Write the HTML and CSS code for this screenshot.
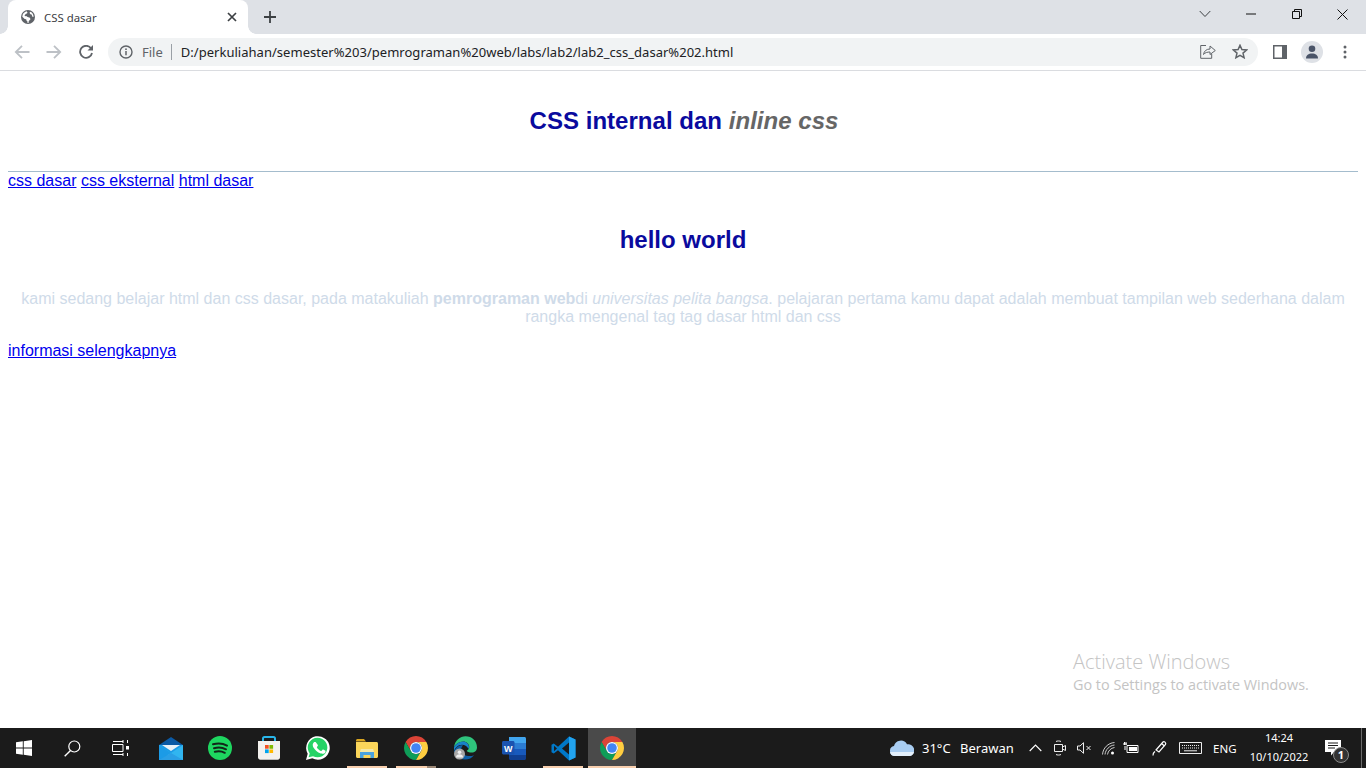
FILE: index.html
```html
<!DOCTYPE html>
<html lang="id">
<head>
<meta charset="utf-8">
<title>CSS dasar</title>
<link rel="stylesheet" href="styles.css">
</head>
<body>
<svg class="defs" width="0" height="0">
  <symbol id="chrome" viewBox="0 0 24 24">
    <path fill="#db4437" d="M22.39 6H12A6 6 0 0 0 6.8 15L1.61 6A12 12 0 0 1 22.39 6Z"/>
    <path fill="#0f9d58" d="M1.61 6L6.8 15A6 6 0 0 0 17.2 15L12 24A12 12 0 0 1 1.61 6Z"/>
    <path fill="#ffcd40" d="M12 24L17.2 15A6 6 0 0 0 12 6H22.39A12 12 0 0 1 12 24Z"/>
    <circle cx="12" cy="12" r="6" fill="#fff"/>
    <circle cx="12" cy="12" r="4.8" fill="#4285f4"/>
  </symbol>
</svg>
<div class="screen">
  <header class="tabstrip">
    <div class="tab">
      <svg class="tab-favicon" width="14" height="14" viewBox="0 0 14 14"><circle cx="7" cy="7" r="7" fill="#5f6368"/><path fill="#fff" d="M5.6 1.2C4 1.7 2.6 2.8 1.8 4.3L1.3 6.8 3.7 9l1.5.3.4 1.5.9.8V13l1 .1.3-2.1 1.7-1.8-.6-1.4-2.3-.9-1.4-.9-1.2.2-.4-1 1.4-1.4 1-.3.5-1.1zM9.3 1.8l-.8 1 .9 1.5 1.2.2.8 2.3 1.1.2C12.7 4.600 11.400 2.700 9.300 1.800z"/></svg>
      <span class="tab-title">CSS dasar</span>
      <svg class="tab-close" width="10" height="10" viewBox="0 0 10 10"><path d="M1 1l8 8M9 1l-8 8" stroke="#3c4043" stroke-width="1.700" fill="none"/></svg>
    </div>
    <svg class="new-tab" width="12" height="12" viewBox="0 0 12 12"><path d="M6 0v12M0 6h12" stroke="#3c4043" stroke-width="1.800" fill="none"/></svg>
    <div class="window-controls">
      <span class="win-btn win-chevron"><svg width="12" height="8" viewBox="0 0 12 8"><path d="M.7 1l5.300 5.500L11.300 1" stroke="#3c4043" fill="none"/></svg></span>
      <span class="win-btn"><svg width="10" height="2" viewBox="0 0 10 2"><path d="M0 1h10" stroke="#111" fill="none"/></svg></span>
      <span class="win-btn"><svg width="10" height="10" viewBox="0 0 10 10"><path d="M.5 2.500h7v7h-7zM2.500 2.500v-2h7v7h-2" stroke="#111" fill="none"/></svg></span>
      <span class="win-btn win-close"><svg width="11" height="11" viewBox="0 0 11 11"><path d="M.5.500l10 10M10.500.500l-10 10" stroke="#111" fill="none"/></svg></span>
    </div>
  </header>

  <nav class="toolbar">
    <svg class="tb-back" width="16" height="14" viewBox="0 0 16 14"><path d="M15.500 7H2M8 .8L1.800 7 8 13.200" stroke="#bdc1c6" stroke-width="1.800" fill="none"/></svg>
    <svg class="tb-forward" width="16" height="14" viewBox="0 0 16 14"><path d="M.5 7H14M8 .8L14.200 7 8 13.200" stroke="#bdc1c6" stroke-width="1.800" fill="none"/></svg>
    <svg class="tb-reload" width="14" height="14" viewBox="0 0 14 14"><path d="M12 3.300A6 6 0 1 0 13 8" stroke="#5f6368" stroke-width="1.800" fill="none"/><path d="M14 0v5.500H8.500z" fill="#5f6368"/></svg>
    <div class="omnibox">
      <svg class="omni-info" width="14" height="14" viewBox="0 0 14 14"><circle cx="7" cy="7" r="6" stroke="#5f6368" stroke-width="1.400" fill="none"/><path d="M7 6v4.200" stroke="#5f6368" stroke-width="1.500"/><circle cx="7" cy="4.200" r=".9" fill="#5f6368"/></svg>
      <span class="omni-file">File</span>
      <span class="omni-sep"></span>
      <span class="omni-url">D:/perkuliahan/semester%203/pemrograman%20web/labs/lab2/lab2_css_dasar%202.html</span>
      <svg class="omni-share" width="16" height="15" viewBox="0 0 16 15"><path d="M6 1.500H.7v12.800h11V10" stroke="#5f6368" fill="none"/><path d="M3.500 10.500C4 7 6.500 5 10 5V2l5.300 4.500L10 10.500V8C7.500 8 5 8.500 3.500 10.500z" stroke="#5f6368" fill="none"/></svg>
      <svg class="omni-star" width="16" height="15" viewBox="0 0 16 15"><path d="M8 1.300l1.900 4.300 4.700.4-3.600 3.100 1.100 4.600L8 11.300l-4.100 2.400L5 9.100 1.400 6l4.700-.4z" stroke="#5f6368" stroke-width="1.500" fill="none"/></svg>
    </div>
    <svg class="tb-panel" width="14" height="14" viewBox="0 0 14 14"><path d="M0 0h14v14H0z" fill="#5f6368"/><path d="M1.500 1.500h7.500v11H1.500z" fill="#fff"/></svg>
    <span class="tb-avatar"><svg width="14" height="14" viewBox="0 0 14 14"><circle cx="7" cy="3.800" r="3.300" fill="#4a5468"/><path d="M1 13.500c0-3.500 2.500-5 6-5s6 1.500 6 5z" fill="#4a5468"/></svg></span>
    <svg class="tb-menu" width="4" height="14" viewBox="0 0 4 14"><circle cx="2" cy="2" r="1.500" fill="#5f6368"/><circle cx="2" cy="7" r="1.500" fill="#5f6368"/><circle cx="2" cy="12" r="1.500" fill="#5f6368"/></svg>
  </nav>

  <main class="page">
    <h2 class="page-title">CSS internal dan <em class="title-em">inline css</em></h2>
    <hr class="rule">
    <div class="links"><a href="#">css dasar</a> <a href="#">css eksternal</a> <a href="#">html dasar</a></div>
    <h2 class="hello">hello world</h2>
    <p class="intro">kami sedang belajar html dan css dasar, pada matakuliah <b>pemrograman web</b>di <i>universitas pelita bangsa</i>. pelajaran pertama kamu dapat adalah membuat tampilan web sederhana dalam rangka mengenal tag tag dasar html dan css</p>
    <a class="more" href="#">informasi selengkapnya</a>
    <div class="activate">
      <div class="activate-title">Activate Windows</div>
      <div class="activate-sub">Go to Settings to activate Windows.</div>
    </div>
  </main>

  <footer class="taskbar">
    <div class="tb-system">
      <span class="slot"><svg width="16" height="16" viewBox="0 0 16 16"><path fill="#fff" d="M0 2.300l6.800-1v6.200H0zM7.700 1.200L16 0v7.500H7.700zM0 8.500h6.800v6.200l-6.800-1zM7.700 8.500H16V16l-8.300-1.200z"/></svg></span>
      <span class="slot"><svg width="17" height="17" viewBox="0 0 17 17"><circle cx="10.300" cy="6.500" r="5.500" stroke="#fff" stroke-width="1.200" fill="none"/><path d="M6.500 10.500L.7 16.300" stroke="#fff" stroke-width="1.400"/></svg></span>
      <span class="slot"><svg width="17" height="16" viewBox="0 0 17 16"><path d="M1 1.500h10M11 0v3M.5 4.500h10.500v7H.5zM1 14.500h10M11 13v3M15.500 0v3M15.500 13v3" stroke="#fff" fill="none"/><path d="M14 6h3v3.500h-3z" fill="#fff"/></svg></span>
    </div>
    <div class="tb-apps">
      <span class="slot"><svg width="24" height="23" viewBox="0 0 24 23"><path d="M12 0l12 8v4H0V8z" fill="#0b5aa5"/><path d="M0 8h24v15H0z" fill="#1c9be6"/><path d="M3 8h18l-9 6z" fill="#e8f1f8"/><path d="M0 8l12 8 12-8v15H12z" fill="#31b5f0"/><path d="M0 23V8l12 8z" fill="#1c9be6"/><path d="M0 23l12-7 12 7z" fill="#2a9fe5"/></svg></span>
      <span class="slot"><svg width="24" height="24" viewBox="0 0 24 24"><circle cx="12" cy="12" r="12" fill="#1ed760"/><path d="M5 8.300c4.800-1.400 10-1 14 1.300M6 12.200c4-1.100 8.500-.8 12 1.100M6.800 15.800c3.500-.8 7-.6 10 1" stroke="#12261a" stroke-width="2" stroke-linecap="round" fill="none"/></svg></span>
      <span class="slot"><svg width="24" height="24" viewBox="0 0 24 24"><path d="M6 6V2.500C6 1.500 6.700 1 7.500 1h9c.8 0 1.500.5 1.500 1.500V6" stroke="#29b6ea" stroke-width="2" fill="none"/><path d="M1 5h22v16.500c0 1.200-1 2.300-2.300 2.300H3.300C2 23.800 1 22.700 1 21.500z" fill="#f3f1ee"/><path d="M8 9h3.700v3.700H8z" fill="#f25022"/><path d="M12.400 9h3.700v3.700h-3.700z" fill="#7fba00"/><path d="M8 13.400h3.700v3.700H8z" fill="#00a4ef"/><path d="M12.400 13.400h3.700v3.700h-3.700z" fill="#ffb900"/></svg></span>
      <span class="slot"><svg width="24" height="24" viewBox="0 0 24 24"><path d="M0 24l1.700-6.200A11.800 11.800 0 1 1 6.300 22.300z" fill="#fff"/><path d="M2.600 21.300l1.100-3.900A9.800 9.800 0 1 1 7 20.200z" fill="#25d366"/><path d="M8.800 6.500c-.5 0-1 .1-1.400.7-.5.6-1.100 1.400-1.100 2.700 0 1.800 1.300 3.600 1.500 3.800.2.300 2.600 4 6.300 5.400 2.800 1.100 3.700.9 4.400.8.900-.2 2-.9 2.200-1.700.2-.9.200-1.500.1-1.700l-2.500-1.300c-.4-.2-.6-.2-.9.100l-1 1.300c-.2.200-.4.300-.8.100-1.700-.7-3.600-2.200-4.500-4-.2-.4 0-.5.200-.8l.8-1.100v-.7L10 7.200c-.3-.6-.6-.7-1.200-.7z" fill="#fff" transform="translate(1.200 .2) scale(.88)"/></svg></span>
      <span class="slot run run-one"><svg width="22" height="19" viewBox="0 0 22 19"><path d="M0 1.500C0 .7.700 0 1.500 0H8l2 2.500h-10z" fill="#d9a520"/><path d="M0 3h20.500c.8 0 1.500.7 1.500 1.500v13c0 .8-.7 1.500-1.500 1.500h-19C.7 19 0 18.300 0 17.500z" fill="#fbd65a"/><path d="M4 13h14l-.8-3H4.800z" fill="#f5e9a8"/><path d="M4 13h14v6h-3.500v-3h-7v3H4z" fill="#4aa3df"/></svg></span>
      <span class="slot run run-stacked"><svg width="24" height="24"><use href="#chrome"/></svg></span>
      <span class="slot"><svg width="24" height="24" viewBox="0 0 24 24"><path d="M1 11C2 4.500 7 .3 12.500.3 19 .3 24 5 24 11.500c0 3-2.300 5-5.300 5-2.700 0-4.500-.8-5-1.800 1.500-.8 2.500-2 2.500-3.700 0-3-2.800-5.500-6-5.500C6.500 5.500 3 7.700 1 11z" fill="#2fc47d"/><path d="M1 11c2-3.300 5.500-5.500 9-5.500 3.200 0 6 2.500 6 5.500 0 .8-.2 1.400-.5 2-1.500-3-3.800-4.300-6.500-4.300C5 8.700 1.500 12 1 16z" fill="#1782c9"/><path d="M1 11c-.7 6.500 4 12.500 11 12.500 4 0 7-1.500 9-4.300-5 2-11 .7-12.500-4.500-.6-2 .2-4 1.500-5.500C5.500 9 2.500 11.500 1 16z" fill="#0e5fa6"/><circle cx="6.500" cy="18" r="5.500" fill="#a8a8a8"/><circle cx="6.500" cy="16.300" r="1.800" fill="#eee"/><path d="M3 21.500c0-2.300 1.500-3.300 3.500-3.300s3.500 1 3.500 3.300z" fill="#eee"/></svg></span>
      <span class="slot"><svg class="word" width="24" height="24" viewBox="0 0 24 24"><path d="M7 1h15.500c.8 0 1.500.7 1.500 1.500V7H7z" fill="#41a5ee"/><path d="M7 7h17v6H7z" fill="#2b7cd3"/><path d="M7 13h17v6H7z" fill="#185abd"/><path d="M7 19h17v3.500c0 .8-.7 1.500-1.500 1.500h-14C7.700 24 7 23.300 7 22.500z" fill="#103f91"/><path d="M0 6.500C0 5.700.7 5 1.500 5H11c.8 0 1.500.7 1.500 1.500V17c0 .8-.7 1.500-1.500 1.500H1.500C.7 18.500 0 17.800 0 17z" fill="#1a53b0"/><text class="word-letter" x="6.250" y="15.500" text-anchor="middle">W</text></svg></span>
      <span class="slot run run-one"><svg width="25" height="25" viewBox="0 0 25 25"><path d="M18 .5L24.500 3.500v18L18 24.500 7 14.200 2.800 17.500.5 16.200V8.800L2.800 7.500 7 10.800z" fill="#0078c8"/><path d="M18 6.500L11 12.500l7 6z" fill="#1b1b1b"/><path d="M18 .5L24.500 3.500v18L18 24.500z" fill="#22a3ee"/><path d="M3 9.800l3 2.700-3 2.700z" fill="#1b1b1b"/></svg></span>
      <span class="slot run run-active"><svg width="24" height="24"><use href="#chrome"/></svg></span>
    </div>
    <div class="tray">
      <svg class="tray-cloud" width="24" height="16" viewBox="0 0 24 16"><path d="M5 16a5 5 0 0 1-1-9.900A7 7 0 0 1 17 4.300 5.800 5.800 0 0 1 19.500 16z" fill="#a9cdf2"/><path d="M0 12h24a5 5 0 0 1-4.500 4H5a5 5 0 0 1-5-4z" fill="#e3effb"/></svg>
      <span class="tray-temp">31°C</span>
      <span class="tray-weather">Berawan</span>
      <svg class="tray-up" width="13" height="8" viewBox="0 0 13 8"><path d="M.7 7l5.800-6 5.800 6" stroke="#fff" stroke-width="1.100" fill="none"/></svg>
      <svg class="tray-meet" width="12" height="16" viewBox="0 0 12 16"><path d="M2 1.500C3 .8 6 .8 7 1.500M2 14.500c1 .7 4 .7 5 0" stroke="#eee" fill="none"/><path d="M.5 4.500h8v7h-8zM8.500 7l3-1.500v5l-3-1.500" stroke="#eee" fill="none"/></svg>
      <svg class="tray-mute" width="15" height="12" viewBox="0 0 15 12"><path d="M.5 4v4h2.500l3.500 3.300V.7L3 4z" stroke="#eee" fill="none"/><path d="M9.500 4l4 4M13.500 4l-4 4" stroke="#eee" fill="none"/></svg>
      <svg class="tray-wifi" width="13" height="13" viewBox="0 0 13 13"><path d="M.5 12.500C1 6 6 1 12.500.5M3 12.500C3.500 7.500 7.500 3.500 12.500 3M5.500 12.500c.4-3.500 3.500-6.600 7-7" stroke="#ddd" stroke-width=".9" fill="none"/><circle cx="10.500" cy="11" r="1.500" fill="#fff"/></svg>
      <svg class="tray-batt" width="16" height="12" viewBox="0 0 16 12"><path d="M4 3.500h11v7H4z" stroke="#fff" fill="none"/><path d="M6 5h8v4H6z" fill="#fff"/><path d="M0 2h4M1.500 0v3M3 0v3M2 4v4" stroke="#fff" fill="none"/></svg>
      <svg class="tray-pen" width="16" height="16" viewBox="0 0 16 16"><path d="M4 10L11 2c1-1 3.500.5 2.500 2.500L7 12z" stroke="#fff" stroke-width="1.200" fill="none"/><path d="M1 15.500c0-3 1-3 2-4M9.500 3.500l3 2.500" stroke="#fff" stroke-width="1.200" fill="none"/></svg>
      <svg class="tray-kbd" width="23" height="12" viewBox="0 0 23 12"><path d="M.5.500h22v11H.5z" stroke="#eee" fill="none"/><path d="M3 3.500h17M3 6h17" stroke="#eee" stroke-dasharray="1 1" fill="none"/><path d="M5 8.800h13" stroke="#eee" fill="none"/></svg>
      <span class="tray-lang">ENG</span>
      <span class="tray-clock"><span>14:24</span><span>10/10/2022</span></span>
      <span class="tray-notif">
        <svg width="16" height="16" viewBox="0 0 16 16"><path d="M0 0h16v12H9l-3 3.500V12H0z" fill="#fff"/><path d="M3 3h10M3 5.500h10M3 8h7" stroke="#1b1b1b" fill="none"/></svg>
        <span class="notif-badge">1</span>
      </span>
      <span class="tray-edge"></span>
    </div>
  </footer>
</div>
</body>
</html>
```

FILE: styles.css
```css
* { box-sizing: border-box; }
html, body { margin: 0; padding: 0; background: #fff; }
.defs { display: block; height: 0; }

.screen {
  width: 1366px;
  height: 768px;
  display: flex;
  flex-direction: column;
  overflow: hidden;
  background: #fff;
}

/* tab strip */
.tabstrip {
  height: 34px;
  flex: none;
  display: flex;
  align-items: flex-start;
  background: #dee1e6;
  padding-left: 8px;
}
.tab {
  position: relative;
  width: 240px;
  height: 34px;
  background: #fff;
  border-radius: 8px 8px 0 0;
  display: flex;
  align-items: center;
  padding: 0 11px 0 13px;
}
.tab::before, .tab::after {
  content: "";
  position: absolute;
  bottom: 0;
  width: 8px;
  height: 8px;
}
.tab::before { left: -8px; background: radial-gradient(circle at 0 0, #dee1e6 7.500px, #fff 8px); }
.tab::after { right: -8px; background: radial-gradient(circle at 100% 0, #dee1e6 7.500px, #fff 8px); }
.tab-favicon { flex: none; }
.tab-title {
  margin-left: 9px;
  flex: 1;
  font: 11.4px/17px "Noto Sans", "Open Sans", sans-serif;
  color: #3c4043;
}
.tab-close { flex: none; }
.new-tab { flex: none; margin: 11px 0 0 16px; }
.window-controls {
  margin-left: auto;
  display: flex;
  height: 28px;
  padding-right: 0;
}
.win-btn {
  width: 46px;
  height: 28px;
  display: flex;
  align-items: center;
  justify-content: center;
}
.win-close { padding-right: 1px; }

/* toolbar */
.toolbar {
  height: 37px;
  flex: none;
  display: flex;
  align-items: center;
  padding: 0 0 1px 14px;
  background: #fff;
  border-bottom: 1px solid #dadce0;
}
.tb-back { flex: none; }
.tb-forward { flex: none; margin-left: 16px; }
.tb-reload { flex: none; margin-left: 17px; }
.omnibox {
  flex: none;
  margin-left: 15px;
  width: 1150px;
  height: 28px;
  border-radius: 14px;
  background: #f1f3f4;
  display: flex;
  align-items: center;
  padding-left: 11px;
}
.omni-info { flex: none; }
.omni-file {
  margin-left: 9px;
  font: 13px/18px "Noto Sans", "Open Sans", sans-serif;
  color: #5f6368;
}
.omni-sep {
  width: 1px;
  height: 16px;
  margin: 0 9px 0 8px;
  background: #9aa0a6;
}
.omni-url {
  flex: 1;
  font: 13px/18px "Noto Sans", "Open Sans", sans-serif;
  letter-spacing: .025px;
  color: #202124;
  white-space: nowrap;
}
.omni-share { flex: none; margin-right: 16px; }
.omni-star { flex: none; margin-right: 10px; }
.tb-panel { flex: none; margin-left: 15px; }
.tb-avatar {
  flex: none;
  margin-left: 14px;
  width: 22px;
  height: 22px;
  border-radius: 50%;
  background: #dee1e6;
  display: flex;
  align-items: center;
  justify-content: center;
}
.tb-menu { flex: none; margin-left: 20px; }

/* page content */
.page {
  position: relative;
  flex: 1;
  padding: 0 8px;
  font: 16px/18px "Liberation Sans", Arial, sans-serif;
  color: #000;
}
.page a { color: #0000ee; }
.page-title {
  margin: 36px 0 37px;
  padding-left: 2px;
  font: bold 24px/27px "Liberation Sans", Arial, sans-serif;
  letter-spacing: .03px;
  color: #0a0a9e;
  text-align: center;
}
.title-em { color: #666; }
.rule {
  margin: 0;
  height: 1px;
  border: 0;
  background: #a4bccd;
}
.hello {
  margin: 36px 0;
  font: bold 24px/28px "Liberation Sans", Arial, sans-serif;
  color: #0a0a9e;
  text-align: center;
}
.intro {
  margin: 0 0 16px;
  color: #cfdbe9;
  text-align: center;
}
.activate {
  position: absolute;
  left: 1073px;
  top: 577px;
  color: #c4c4c4;
  font-family: "Open Sans", "Noto Sans", sans-serif;
}
.activate-title { font-size: 20px; line-height: 27px; font-weight: 300; }
.activate-sub { font-size: 14.4px; line-height: 20px; }

/* taskbar */
.taskbar {
  height: 40px;
  flex: none;
  display: flex;
  align-items: stretch;
  background: #1b1b1b;
  color: #fff;
  font-family: "Noto Sans", "Open Sans", sans-serif;
}
.tb-system { display: flex; flex: none; width: 147px; }
.tb-apps { display: flex; flex: none; gap: 1px; }
.slot {
  position: relative;
  width: 48px;
  display: flex;
  align-items: center;
  justify-content: center;
  flex: none;
}
.run::after {
  content: "";
  position: absolute;
  left: 4px;
  right: 4px;
  bottom: 0;
  height: 2px;
  background: #f8cfae;
}
.run-stacked::after {
  background: linear-gradient(to right, #f8cfae 0 31px, #9c8876 31px);
}
.run-active { background: #4a4a4a; }
.run-active::after { left: 0; right: 0; }
.word-letter {
  font: bold 9px "Liberation Sans", Arial, sans-serif;
  fill: #fff;
}
.tray {
  flex: 1;
  min-width: 0;
  display: flex;
  align-items: center;
  padding-left: 254px;
  font-size: 13px;
}
.tray-cloud { flex: none; }
.tray-temp { margin-left: 8px; width: 38px; flex: none; }
.tray-weather { width: 52px; flex: none; }
.tray-up { margin-left: 17px; flex: none; }
.tray-meet { margin-left: 12px; flex: none; }
.tray-mute { margin-left: 11px; flex: none; }
.tray-wifi { margin-left: 10px; flex: none; }
.tray-batt { margin-left: 8px; flex: none; }
.tray-pen { margin-left: 13px; flex: none; }
.tray-kbd { margin-left: 11px; flex: none; }
.tray-lang { margin-left: 11px; width: 24px; flex: none; font-size: 11.5px; }
.tray-clock {
  width: 74px;
  flex: none;
  margin-left: 5px;
  padding-bottom: 2px;
  display: flex;
  flex-direction: column;
  align-items: center;
  font-size: 11px;
  line-height: 19px;
}
.tray-notif {
  position: relative;
  display: flex;
  flex: none;
  margin-left: 9px;
  width: 32px;
  height: 22px;
  padding-top: 3px;
}
.notif-badge {
  position: absolute;
  left: 8px;
  top: 10px;
  width: 16px;
  height: 16px;
  border-radius: 50%;
  border: 1px solid #8a8a8a;
  background: #333;
  font: bold 11px/14px "Noto Sans", sans-serif;
  text-align: center;
}
.tray-edge {
  width: 1px;
  height: 40px;
  background: #6a6a6a;
  flex: none;
  margin-left: 4px;
}
```
